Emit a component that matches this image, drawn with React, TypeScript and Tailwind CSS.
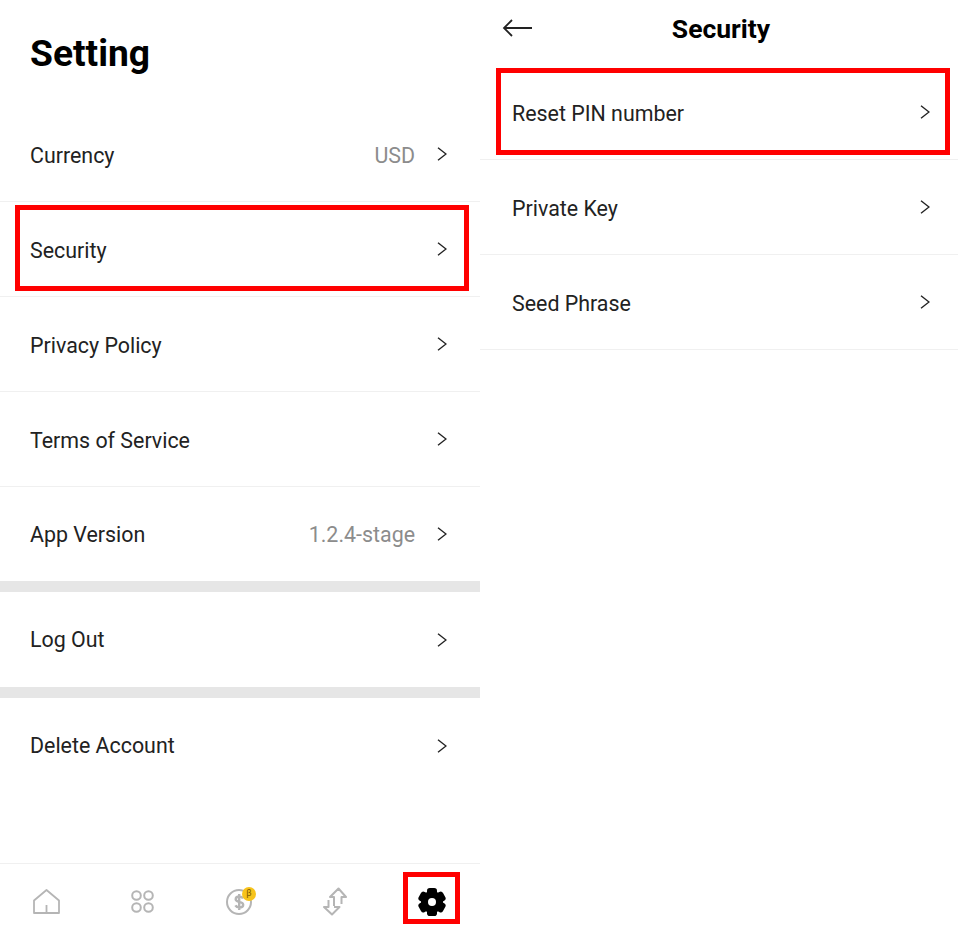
import React from "react";

const FONT = "font-['Roboto','Liberation_Sans',sans-serif]";

const Chevron = () => (
  <svg width="10" height="14" viewBox="0 0 10 14" fill="none" stroke="#222" strokeWidth="1.4">
    <path d="M1 .7l8 6.300-8 6.300" />
  </svg>
);

type RowProps = {
  label: string;
  value?: string;
  border?: boolean;
  rowClass?: string;
  labelClass?: string;
  chevronClass?: string;
  boxClass?: string;
};

const Row = ({
  label,
  value,
  border = true,
  rowClass = "h-[95px]",
  labelClass = "pt-[4px]",
  chevronClass = "mr-[33px]",
  boxClass,
}: RowProps) => (
  <div className={`relative shrink-0 flex items-center pl-[30px] ${rowClass} ${border ? "border-b border-[#f0f0f0]" : ""}`}>
    <span className={`flex-1 text-[21.4px] text-[#222] ${labelClass}`}>{label}</span>
    {value && <span className={`mr-[22px] text-[21.4px] text-[#8c8c8c] ${labelClass}`}>{value}</span>}
    <span className={`flex ${chevronClass}`}>
      <Chevron />
    </span>
    {boxClass && <div className={`absolute border-[5px] border-[#ff0000] ${boxClass}`} />}
  </div>
);

const HomeIcon = () => (
  <svg width="27" height="25" viewBox="0 0 27 25" fill="none" stroke="#b5b5b5" strokeWidth="1.800" strokeLinejoin="round">
    <path d="M1 24V11.500L13.500 1 26 11.500V24z" />
    <path d="M13.500 24v-8" />
  </svg>
);

const AppsIcon = () => (
  <svg width="23" height="23" viewBox="0 0 23 23" fill="none" stroke="#b5b5b5" strokeWidth="2">
    <circle cx="5.500" cy="5.500" r="4.300" />
    <circle cx="17.500" cy="5.500" r="4.300" />
    <circle cx="5.500" cy="17.500" r="4.300" />
    <circle cx="17.500" cy="17.500" r="4.300" />
  </svg>
);

const CoinIcon = () => (
  <div className="relative w-[26px] h-[26px]">
    <svg width="26" height="26" viewBox="0 0 26 26" fill="none" stroke="#b5b5b5" strokeWidth="2">
      <circle cx="13" cy="13" r="12" />
      <path strokeWidth="2.400" d="M17 9.500c-.7-1.400-2-2-3.700-2-2.100 0-3.600 1-3.600 2.700 0 3.700 7.500 1.700 7.500 5.500 0 1.700-1.700 2.700-3.900 2.700-1.800 0-3.100-.7-3.900-2.100M13.200 5v16" />
    </svg>
    <div className="absolute -top-[2px] -right-[4px] w-[14px] h-[14px] rounded-full bg-[#f7c31c] flex items-center justify-center text-[9px] leading-none text-[#7a5a00]">
      β
    </div>
  </div>
);

const SwapIcon = () => (
  <svg width="24" height="29" viewBox="0 0 24 29" fill="none" stroke="#b5b5b5" strokeWidth="2" strokeLinejoin="round">
    <path d="M11 19V10H7L15.500 1.500 23 10H18.500V17" />
    <path d="M5.500 13V20H1L9 27.500 16.500 20H11" />
  </svg>
);

const GearIcon = () => (
  <svg width="28" height="28" viewBox="0 0 28 28">
    <circle cx="14" cy="14" r="11" fill="#000" />
    <rect x="9" y="0" width="10" height="28" rx="2.800" fill="#000" />
    <rect x="9" y="0" width="10" height="28" rx="2.800" fill="#000" transform="rotate(60 14 14)" />
    <rect x="9" y="0" width="10" height="28" rx="2.800" fill="#000" transform="rotate(120 14 14)" />
    <circle cx="14" cy="14" r="4" fill="#fff" />
  </svg>
);

const BottomNav = () => (
  <div className="mt-auto h-[70px] shrink-0 border-t border-[#f0f0f0] grid grid-cols-5 items-center pt-[6px]">
    <div className="flex justify-center pr-[4px]"><HomeIcon /></div>
    <div className="flex justify-center pr-[3px]"><AppsIcon /></div>
    <div className="flex justify-center pr-[2px]"><CoinIcon /></div>
    <div className="flex justify-center pr-[2px]"><SwapIcon /></div>
    <div className="flex justify-center relative">
      <GearIcon />
      <div className="absolute left-[19px] top-[-16px] w-[57px] h-[52px] border-[5px] border-[#ff0000]" />
    </div>
  </div>
);

const Separator = () => <div className="h-[11px] shrink-0 bg-[#e6e6e6]" />;

const SettingScreen = () => (
  <div className="w-[480px] h-full flex flex-col">
    <h1 className="h-[107px] shrink-0 pl-[30px] pt-[28px] text-[37.200px] leading-[50px] font-bold text-black">Setting</h1>
    <Row label="Currency" value="USD" />
    <Row label="Security" boxClass="left-[15px] right-[11px] top-[3px] h-[86px]" />
    <Row label="Privacy Policy" />
    <Row label="Terms of Service" />
    <Row label="App Version" value="1.2.4-stage" border={false} rowClass="h-[94px]" labelClass="pt-[3px]" />
    <Separator />
    <Row label="Log Out" border={false} labelClass="pt-[2px]" />
    <Separator />
    <Row label="Delete Account" border={false} labelClass="pt-[1px]" />
    <BottomNav />
  </div>
);

const SecurityScreen = () => (
  <div className="w-[478px] h-full flex flex-col">
    <div className="relative h-[65px] shrink-0 flex items-start justify-center pt-[10px] pl-[4px]">
      <svg className="absolute left-[22px] top-[18px]" width="31" height="20" viewBox="0 0 31 20" fill="none" stroke="#222" strokeWidth="1.800">
        <path d="M30 10H2M10 2l-8 8 8 8" />
      </svg>
      <span className="text-[26.500px] leading-[38px] font-bold text-black">Security</span>
    </div>
    <div className="flex flex-col [&>div]:pl-[32px]">
      <Row label="Reset PIN number" chevronClass="mr-[28px]" boxClass="left-[16px] right-[8px] top-[3px] h-[87px]" />
      <Row label="Private Key" chevronClass="mr-[28px]" />
      <Row label="Seed Phrase" chevronClass="mr-[28px]" />
    </div>
  </div>
);

export default function App() {
  return (
    <div className={`w-[958px] h-[933px] bg-white flex overflow-hidden ${FONT}`}>
      <SettingScreen />
      <SecurityScreen />
    </div>
  );
}
